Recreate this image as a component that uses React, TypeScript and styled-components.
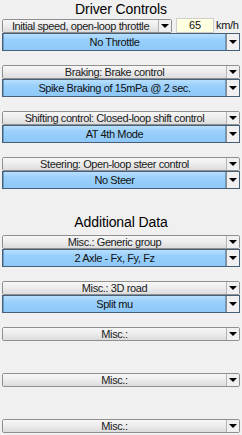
import React from "react";
import styled, { createGlobalStyle } from "styled-components";

const Global = createGlobalStyle`
  html, body { margin: 0; padding: 0; background: #f0f0f0; }
  body { font-family: "Liberation Sans", Arial, sans-serif; color: #111; }
`;

const Page = styled.div`
  width: 242px;
  height: 435px;
  box-sizing: border-box;
  padding: 0 2px;
  background: #f0f0f0;
  overflow: hidden;
`;

const SectionTitle = styled.div<{ $top: number; $height: number }>`
  height: ${(p) => p.$height}px;
  box-sizing: border-box;
  padding-top: ${(p) => p.$top}px;
  font-size: 14px;
  line-height: 16px;
  text-align: center;
  color: #000;
  letter-spacing: -0.1px;
`;

const Group = styled.div`
  height: 46px;
  display: flex;
  flex-direction: column;
`;

const HeaderLine = styled.div`
  display: flex;
  align-items: stretch;
  flex: none;
  height: 14px;
  gap: 4px;
`;

const Combo = styled.div<{ $width?: number }>`
  display: flex;
  flex: none;
  height: 14px;
  box-sizing: border-box;
  width: ${(p) => (p.$width ? `${p.$width}px` : "100%")};
  border: 1px solid #8f8f8f;
  border-radius: 2px;
  background: #f0f0f0;
`;

const ComboFace = styled.div`
  flex: 1;
  min-width: 0;
  background: linear-gradient(#f7f7f7 0%, #ececec 50%, #dcdcdc 100%);
  border-right: 1px solid #b4b4b4;
  font-size: 11px;
  line-height: 12px;
  letter-spacing: -0.4px;
  text-align: center;
  white-space: nowrap;
  overflow: hidden;
  color: #1a1a1a;
`;

const ArrowCell = styled.div<{ $boxed?: boolean }>`
  width: 12px;
  flex: none;
  display: flex;
  align-items: center;
  justify-content: center;
  background: #f0f0f0;
  ${(p) => (p.$boxed ? "border-left: 1px solid #8a8a8a;" : "")}
`;

const Tri = styled.span`
  width: 0;
  height: 0;
  border-left: 4px solid transparent;
  border-right: 4px solid transparent;
  border-top: 4px solid #000;
`;

const SpeedInput = styled.div`
  width: 38px;
  flex: none;
  box-sizing: border-box;
  height: 15px;
  margin-top: -1px;
  background: #ffffe1;
  border: 1px solid #cfcfcf;
  font-size: 11px;
  line-height: 13px;
  text-align: center;
  color: #111;
`;

const Unit = styled.span`
  font-size: 11px;
  line-height: 12px;
  letter-spacing: -0.3px;
  margin-left: -2px;
  color: #111;
  white-space: nowrap;
`;

const Select = styled.div`
  display: flex;
  flex: none;
  height: 18px;
  box-sizing: border-box;
  border: 1px solid #46607a;
  background: #f0f0f0;
`;

const SelectFace = styled.div`
  flex: 1;
  background: linear-gradient(#b9dffd 0%, #9ad0fb 35%, #8ec8f8 100%);
  box-shadow: inset 1px 0 #6b9cc6, inset -1px 0 #6b9cc6;
  font-size: 11px;
  line-height: 16px;
  letter-spacing: -0.4px;
  text-align: center;
  white-space: nowrap;
  color: #111;
`;

type G = { header: string; value?: string };

const driver: G[] = [
  { header: "Braking: Brake control", value: "Spike Braking of 15mPa @ 2 sec." },
  { header: "Shifting control: Closed-loop shift control", value: "AT 4th Mode" },
  { header: "Steering: Open-loop steer control", value: "No Steer" },
];

const additional: G[] = [
  { header: "Misc.: Generic group", value: "2 Axle - Fx, Fy, Fz" },
  { header: "Misc.: 3D road", value: "Split mu" },
  { header: "Misc.:" },
  { header: "Misc.:" },
  { header: "Misc.:" },
];

const ValueSelect = ({ value }: { value: string }) => (
  <Select>
    <SelectFace>{value}</SelectFace>
    <ArrowCell $boxed>
      <Tri />
    </ArrowCell>
  </Select>
);

const GroupBlock = ({ g }: { g: G }) => (
  <Group>
    <Combo>
      <ComboFace>{g.header}</ComboFace>
      <ArrowCell>
        <Tri />
      </ArrowCell>
    </Combo>
    {g.value && <ValueSelect value={g.value} />}
  </Group>
);

export default function App() {
  return (
    <>
      <Global />
      <Page>
        <SectionTitle $top={1} $height={19}>Driver Controls</SectionTitle>
        <Group>
          <HeaderLine>
            <Combo $width={170}>
              <ComboFace>Initial speed, open-loop throttle</ComboFace>
              <ArrowCell>
                <Tri />
              </ArrowCell>
            </Combo>
            <SpeedInput>65</SpeedInput>
            <Unit>km/h</Unit>
          </HeaderLine>
          <ValueSelect value="No Throttle" />
        </Group>
        {driver.map((g, i) => (
          <GroupBlock key={i} g={g} />
        ))}
        <SectionTitle $top={11} $height={32}>Additional Data</SectionTitle>
        {additional.map((g, i) => (
          <GroupBlock key={i} g={g} />
        ))}
      </Page>
    </>
  );
}
